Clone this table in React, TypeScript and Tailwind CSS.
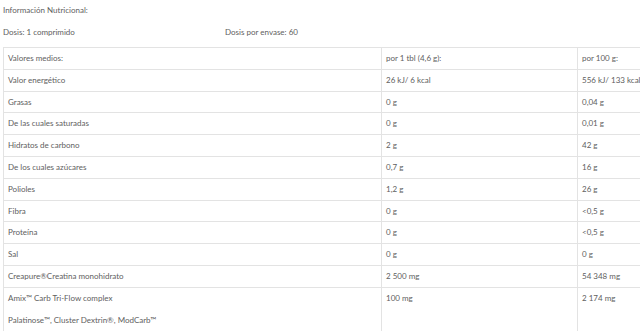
import React from 'react';

const rows: [string[], string, string][] = [
  [['Valor energético'], '26 kJ/ 6 kcal', '556 kJ/ 133 kcal'],
  [['Grasas'], '0 g', '0,04 g'],
  [['De las cuales saturadas'], '0 g', '0,01 g'],
  [['Hidratos de carbono'], '2 g', '42 g'],
  [['De los cuales azúcares'], '0,7 g', '16 g'],
  [['Polioles'], '1,2 g', '26 g'],
  [['Fibra'], '0 g', '<0,5 g'],
  [['Proteína'], '0 g', '<0,5 g'],
  [['Sal'], '0 g', '0 g'],
  [['Creapure®Creatina monohidrato'], '2 500 mg', '54 348 mg'],
  [['Amix™ Carb Tri-Flow complex', 'Palatinose™, Cluster Dextrin®, ModCarb™'], '100 mg', '2 174 mg'],
];

const cell = 'border border-[#e3e3e3] px-[4px] py-0 align-top text-left font-normal';

export default function App() {
  return (
    <div className="w-[640px] h-[331px] overflow-hidden bg-white text-[#606060] text-[8px] leading-[21px]" style={{ fontFamily: 'Lato, "Open Sans", sans-serif' }}>
      <div className="pl-[3px] pt-0">Información Nutricional:</div>
      <div className="flex pl-[3px] pt-[1px]">
        <div className="w-[222px]">Dosis: 1 comprimido</div>
        <div>Dosis por envase: 60</div>
      </div>
      <div className="pl-[3px] pt-[4px] leading-[20.8px]">
        <table className="border-collapse w-[660px] table-fixed">
          <colgroup>
            <col className="w-[378px]" />
            <col className="w-[196px]" />
            <col />
          </colgroup>
          <thead>
            <tr>
              <th className={cell}>Valores medios:</th>
              <th className={cell}>por 1 tbl (4,6 g):</th>
              <th className={cell}>por 100 g:</th>
            </tr>
          </thead>
          <tbody>
            {rows.map(([name, a, b], i) => (
              <tr key={i}>
                <td className={cell}>
                  {name.map((n, j) => (
                    <div key={j} className={j > 0 ? 'pt-px pb-[2px]' : ''}>{n}</div>
                  ))}
                </td>
                <td className={cell}>{a}</td>
                <td className={cell}>{b}</td>
              </tr>
            ))}
          </tbody>
        </table>
      </div>
    </div>
  );
}
